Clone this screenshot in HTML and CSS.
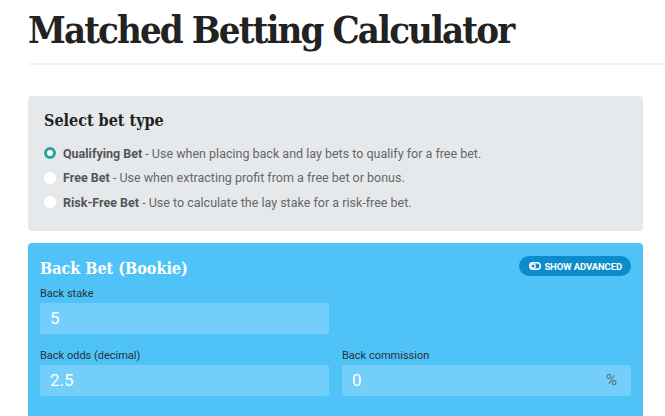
FILE: index.html
```html
<!DOCTYPE html>
<html lang="en">
<head>
  <meta charset="UTF-8">
  <title>Matched Betting Calculator</title>
  <link rel="stylesheet" href="styles.css">
</head>
<body>
  <div class="page">
    <h1 class="title">Matched Betting Calculator</h1>
    <hr class="rule">

    <div class="panel bet-type">
      <h2>Select bet type</h2>
      <label class="option">
        <span class="radio checked"></span>
        <span><strong>Qualifying Bet</strong> - Use when placing back and lay bets to qualify for a free bet.</span>
      </label>
      <label class="option">
        <span class="radio"></span>
        <span><strong>Free Bet</strong> - Use when extracting profit from a free bet or bonus.</span>
      </label>
      <label class="option">
        <span class="radio"></span>
        <span><strong>Risk-Free Bet</strong> - Use to calculate the lay stake for a risk-free bet.</span>
      </label>
    </div>

    <div class="panel back-bet">
      <div class="panel-head">
        <h2>Back Bet (Bookie)</h2>
        <button class="toggle">
          <svg width="12" height="8" viewBox="0 0 12 8"><rect x="0.75" y="0.75" width="10.5" height="6.5" rx="3.25" fill="none" stroke="#fff" stroke-width="1.5"/><circle cx="4" cy="4" r="2.2" fill="none" stroke="#fff" stroke-width="1.3"/></svg>
          SHOW ADVANCED
        </button>
      </div>
      <div class="field">
        <label>Back stake</label>
        <div class="input">5</div>
      </div>
      <div class="row">
        <div class="field">
          <label>Back odds (decimal)</label>
          <div class="input">2.5</div>
        </div>
        <div class="field">
          <label>Back commission</label>
          <div class="input">0<span class="unit">%</span></div>
        </div>
      </div>
    </div>
  </div>
</body>
</html>
```

FILE: styles.css
```css
body {
  margin: 0;
  font-family: Roboto, "Liberation Sans", sans-serif;
  background: #fff;
  overflow: hidden;
}
.page {
  padding-left: 28px;
}
.title {
  font-family: "DejaVu Serif", "Liberation Serif", serif;
  font-stretch: condensed;
  font-size: 38px;
  font-weight: bold;
  color: #222;
  margin: 0;
  padding-top: 7px;
  line-height: 46px;
  letter-spacing: -1.9px;
}
.rule {
  border: none;
  height: 2px;
  background: #f1f2f3;
  margin: 10px 0 31px;
}
.panel {
  margin-right: 22px;
  border-radius: 4px;
  padding: 12px 12px;
}
.panel h2 {
  font-family: "DejaVu Serif", serif;
  font-stretch: condensed;
  font-size: 16px;
  font-weight: bold;
  margin: 0;
}
.bet-type {
  background: #e6e9ec;
  padding: 15px 16px 16px 16px;
  margin-bottom: 12px;
}
.bet-type h2 {
  color: #222;
  margin-bottom: 11px;
}
.option {
  display: flex;
  align-items: center;
  gap: 7px;
  font-size: 12.5px;
  color: #666;
  height: 24.5px;
}
.option strong { color: #555; }
.radio {
  width: 12px;
  height: 12px;
  border-radius: 50%;
  background: #fff;
  box-sizing: border-box;
}
.radio.checked {
  border: 3px solid #26a69a;
}
.back-bet {
  background: #4fc3f7;
  height: 173px;
  box-sizing: border-box;
  padding-top: 14px;
  border-radius: 4px 4px 0 0;
}
.panel-head {
  display: flex;
  justify-content: space-between;
  align-items: center;
  margin-top: 2px;
}
.back-bet h2 {
  color: #fff;
  font-size: 16px;
}
.toggle {
  display: flex;
  align-items: center;
  gap: 3px;
  background: #0d8ccb;
  color: #fff;
  border: none;
  border-radius: 10px;
  height: 20px;
  padding: 0 9px 0 10px;
  font-family: Roboto, sans-serif;
  font-size: 9.5px;
  font-weight: bold;
  letter-spacing: -0.1px;
  margin-top: -4px;
}
.field label {
  display: block;
  font-size: 11px;
  color: #263238;
  margin: 9px 0 3px;
}
.field {
  width: 289px;
}
.input {
  display: flex;
  justify-content: space-between;
  align-items: center;
  height: 31px;
  background: #73cef9;
  border-radius: 2px;
  padding: 0 14px 0 10px;
  color: #fff;
  font-size: 17px;
}
.unit {
  color: #546e7a;
  font-size: 15px;
}
.row {
  display: flex;
  gap: 13px;
  margin-top: 6px;
}
```
